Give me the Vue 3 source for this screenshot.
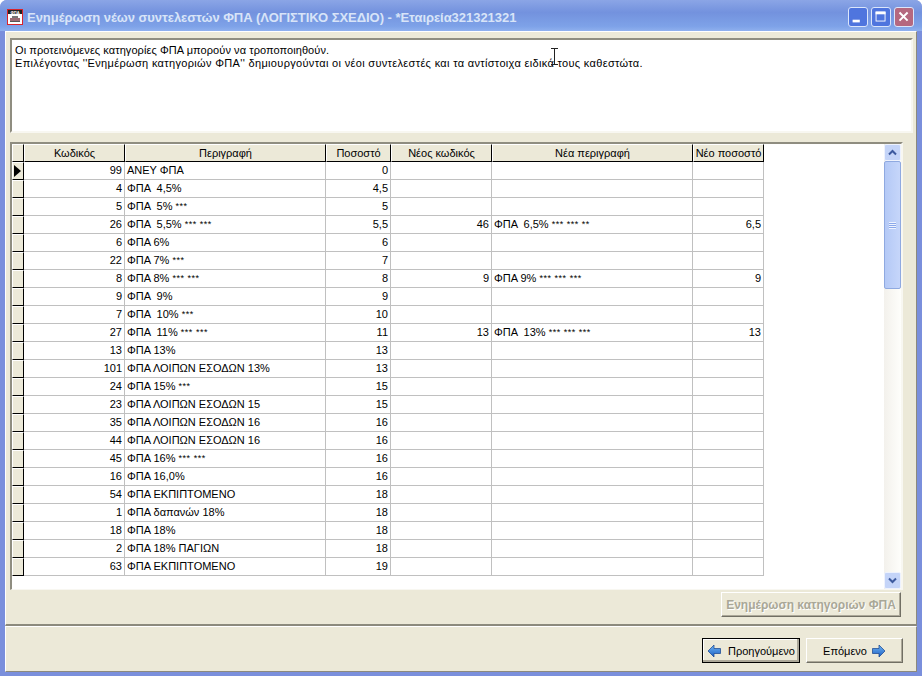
<script setup>
const columns = [
  { key: 'code', label: 'Κωδικός', cls: 'num' },
  { key: 'desc', label: 'Περιγραφή', cls: 'txt' },
  { key: 'pct', label: 'Ποσοστό', cls: 'num' },
  { key: 'newCode', label: 'Νέος κωδικός', cls: 'num' },
  { key: 'newDesc', label: 'Νέα περιγραφή', cls: 'txt' },
  { key: 'newPct', label: 'Νέο ποσοστό', cls: 'num' }
]

const rows = [
  { code: '99', desc: 'ΑΝΕΥ ΦΠΑ', pct: '0' },
  { code: '4', desc: 'ΦΠΑ  4,5%', pct: '4,5' },
  { code: '5', desc: 'ΦΠΑ  5% ***', pct: '5' },
  { code: '26', desc: 'ΦΠΑ  5,5% *** ***', pct: '5,5', newCode: '46', newDesc: 'ΦΠΑ  6,5% *** *** **', newPct: '6,5' },
  { code: '6', desc: 'ΦΠΑ 6%', pct: '6' },
  { code: '22', desc: 'ΦΠΑ 7% ***', pct: '7' },
  { code: '8', desc: 'ΦΠΑ 8% *** ***', pct: '8', newCode: '9', newDesc: 'ΦΠΑ 9% *** *** ***', newPct: '9' },
  { code: '9', desc: 'ΦΠΑ  9%', pct: '9' },
  { code: '7', desc: 'ΦΠΑ  10% ***', pct: '10' },
  { code: '27', desc: 'ΦΠΑ  11% *** ***', pct: '11', newCode: '13', newDesc: 'ΦΠΑ  13% *** *** ***', newPct: '13' },
  { code: '13', desc: 'ΦΠΑ 13%', pct: '13' },
  { code: '101', desc: 'ΦΠΑ ΛΟΙΠΩΝ ΕΣΟΔΩΝ 13%', pct: '13' },
  { code: '24', desc: 'ΦΠΑ 15% ***', pct: '15' },
  { code: '23', desc: 'ΦΠΑ ΛΟΙΠΩΝ ΕΣΟΔΩΝ 15', pct: '15' },
  { code: '35', desc: 'ΦΠΑ ΛΟΙΠΩΝ ΕΣΟΔΩΝ 16', pct: '16' },
  { code: '44', desc: 'ΦΠΑ ΛΟΙΠΩΝ ΕΣΟΔΩΝ 16', pct: '16' },
  { code: '45', desc: 'ΦΠΑ 16% *** ***', pct: '16' },
  { code: '16', desc: 'ΦΠΑ 16,0%', pct: '16' },
  { code: '54', desc: 'ΦΠΑ ΕΚΠΙΠΤΟΜΕΝΟ', pct: '18' },
  { code: '1', desc: 'ΦΠΑ δαπανών 18%', pct: '18' },
  { code: '18', desc: 'ΦΠΑ 18%', pct: '18' },
  { code: '2', desc: 'ΦΠΑ 18% ΠΑΓΙΩΝ', pct: '18' },
  { code: '63', desc: 'ΦΠΑ ΕΚΠΙΠΤΟΜΕΝΟ', pct: '19' }
]

// the asterisks are much smaller than the rest of the text in the old grid font
const parts = (value) => (value ? value.split(/(\*+)/).filter(Boolean) : [])
</script>

<template>
  <div class="window">
    <div class="titlebar">
      <svg class="app-icon" width="16" height="16" viewBox="0 0 16 16">
        <rect x="0.5" y="0.5" width="15" height="15" fill="#fff" stroke="#d8232a" />
        <rect x="1" y="1" width="14" height="4" fill="#222" />
        <text x="8" y="4.6" font-size="4" font-weight="700" text-anchor="middle" fill="#fff" font-family="Liberation Sans, sans-serif">ΦΠΑ</text>
        <rect x="5" y="7" width="6" height="2" fill="#777" />
        <rect x="3" y="9" width="10" height="3" fill="#9b6a72" />
        <rect x="3" y="12" width="10" height="1" fill="#555" />
      </svg>
      <div class="title">Ενημέρωση νέων συντελεστών ΦΠΑ (ΛΟΓΙΣΤΙΚΟ ΣΧΕΔΙΟ) - *Εταιρεία321321321</div>
      <div class="caption-btns">
        <button class="cap">
          <svg width="20" height="20" viewBox="0 0 20 20"><rect x="4" y="13" width="8" height="3" fill="#fff" /></svg>
        </button>
        <button class="cap">
          <svg width="20" height="20" viewBox="0 0 20 20"><rect x="4.500" y="4.500" width="10" height="10" fill="none" stroke="#fff" /><rect x="4" y="4" width="11" height="3" fill="#fff" /></svg>
        </button>
        <button class="cap cap-close">
          <svg width="20" height="20" viewBox="0 0 20 20"><path d="M5 5l9 9M14 5l-9 9" stroke="#fff" stroke-width="2.2" /></svg>
        </button>
      </div>
    </div>

    <div class="client">
      <div class="main-panel">
        <div class="memo">
          <div class="line-one">Οι προτεινόμενες κατηγορίες ΦΠΑ μπορούν να τροποποιηθούν.</div>
          <div class="line-two">Επιλέγοντας ''Ενημέρωση κατηγοριών ΦΠΑ'' δημιουργούνται οι νέοι συντελεστές και τα αντίστοιχα ειδικά τους καθεστώτα.</div>
          <svg class="ibeam" width="7" height="17" viewBox="0 0 7 17">
            <path d="M0 .5h7M0 16.500h7M3.500 0v17" stroke="#222" fill="none" />
          </svg>
        </div>

        <div class="grid">
          <div class="grid-table">
            <div class="g-row g-head">
              <div class="ind head-cell"></div>
              <div v-for="c in columns" :key="c.key" class="head-cell">{{ c.label }}</div>
            </div>
            <div v-for="(r, i) in rows" :key="r.code + i" class="g-row">
              <div class="ind">
                <svg v-if="i === 0" width="9" height="14" viewBox="0 0 9 14"><path d="M1 1l7 6-7 6z" fill="#000" /></svg>
              </div>
              <div v-for="c in columns" :key="c.key" class="cell" :class="c.cls"><template v-for="(p, n) in parts(r[c.key])" :key="n"><span v-if="p[0] === '*'" class="stars">{{ p }}</span><template v-else>{{ p }}</template></template></div>
            </div>
          </div>
          <div class="scrollbar">
            <button class="sb-btn">
              <svg width="9" height="7" viewBox="0 0 9 7"><path d="M1 5.500l3.500-3.500 3.500 3.500" fill="none" stroke="#3d5a9e" stroke-width="2" /></svg>
            </button>
            <div class="sb-track">
              <div class="sb-thumb"><span class="grip"></span></div>
            </div>
            <button class="sb-btn">
              <svg width="9" height="7" viewBox="0 0 9 7"><path d="M1 1.500l3.500 3.500 3.500-3.500" fill="none" stroke="#3d5a9e" stroke-width="2" /></svg>
            </button>
          </div>
        </div>

        <div class="update-row">
          <button class="btn btn-update" disabled>Ενημέρωση κατηγοριών ΦΠΑ</button>
        </div>
      </div>

      <div class="nav-panel">
        <button class="btn btn-nav btn-prev btn-default">
          <svg width="14" height="14" viewBox="0 0 14 14">
            <defs>
              <linearGradient id="arrow-l" x1="0" y1="0" x2="0" y2="1">
                <stop offset="0" stop-color="#6fb4f2" />
                <stop offset="1" stop-color="#1c5fc4" />
              </linearGradient>
            </defs>
            <path d="M7 1L1 7l6 6V9.500h6.500v-5H7z" fill="url(#arrow-l)" stroke="#12408c" stroke-width="0.7" />
          </svg>
          Προηγούμενο
        </button>
        <button class="btn btn-nav">
          Επόμενο
          <svg width="14" height="14" viewBox="0 0 14 14">
            <defs>
              <linearGradient id="arrow-r" x1="0" y1="0" x2="0" y2="1">
                <stop offset="0" stop-color="#6fb4f2" />
                <stop offset="1" stop-color="#1c5fc4" />
              </linearGradient>
            </defs>
            <path d="M7 1l6 6-6 6V9.500H.5v-5H7z" fill="url(#arrow-r)" stroke="#12408c" stroke-width="0.7" />
          </svg>
        </button>
      </div>
    </div>
  </div>
</template>

<style>
html, body {
  margin: 0;
  background: #fff;
}
</style>

<style scoped>
.window {
  width: 922px;
  height: 676px;
  box-sizing: border-box;
  display: flex;
  flex-direction: column;
  background: #7a8fdc;
  border-radius: 7px 7px 0 0;
  font-family: "Liberation Sans", Arial, sans-serif;
  font-size: 11px;
  color: #000;
  overflow: hidden;
}

.titlebar {
  height: 31px;
  flex: none;
  display: flex;
  align-items: center;
  padding: 3px 8px 0 7px;
  box-sizing: border-box;
  background: linear-gradient(#8ba5e6 0, #7392de 40%, #7ea2e8 85%, #8fb0ee 100%);
}

.app-icon {
  flex: none;
  margin-right: 4px;
}

.title {
  flex: 1;
  font-size: 13px;
  font-weight: 700;
  letter-spacing: -0.04px;
  color: #d8e4f8;
  white-space: nowrap;
}

.caption-btns {
  display: flex;
  gap: 3px;
}

.cap {
  width: 20px;
  height: 20px;
  padding: 0;
  border: 1px solid #dbe6fb;
  border-radius: 3px;
  background: #4f75de;
  display: flex;
  align-items: center;
  justify-content: center;
}

.cap-close {
  background: #b5687f;
}

.client {
  flex: 1;
  margin: 0 5px 4px 5px;
  background: #ece9d8;
  display: flex;
  flex-direction: column;
  min-height: 0;
}

.main-panel {
  flex: 1;
  display: flex;
  flex-direction: column;
  padding: 7px 0 0 5px;
  border: 1px solid;
  border-color: #fff #8c8a7d #8c8a7d #fff;
  border-bottom-width: 2px;
  min-height: 0;
}

.memo {
  position: relative;
  height: 95px;
  box-sizing: border-box;
  margin: -1px 3px 0 -1px;
  padding: 4px 0 0 3px;
  background: #fff;
  border: 2px solid;
  border-color: #8f8d80 #f8f7f1 #f8f7f1 #8f8d80;
  line-height: 13px;
}

.line-one {
  letter-spacing: 0.07px;
}

.line-two {
  letter-spacing: 0.33px;
}

.ibeam {
  position: absolute;
  left: 539px;
  top: 8px;
}

.grid {
  margin: 9px 13px 0 -1px;
  height: 448px;
  box-sizing: border-box;
  display: flex;
  background: #fff;
  border: 2px solid;
  border-color: #8f8d80 #f8f7f1 #f8f7f1 #8f8d80;
  border-bottom-width: 1px;
}

.grid-table {
  flex: 1;
}

.g-row {
  display: grid;
  grid-template-columns: 12px 101px 201px 65px 101px 201px 71px;
  width: 752px;
  height: 18px;
}

.g-head {
  height: 18px;
}

.head-cell {
  box-sizing: border-box;
  background: #ece9d8;
  border-top: 1px solid #fff;
  border-left: 1px solid #fff;
  border-right: 1px solid #000;
  border-bottom: 1px solid #000;
  text-align: center;
  line-height: 16px;
  white-space: nowrap;
  overflow: hidden;
}

.ind {
  box-sizing: border-box;
  background: #ece9d8;
  border-top: 1px solid #fff;
  border-left: 1px solid #fff;
  border-right: 1px solid #000;
  border-bottom: 1px solid #000;
  display: flex;
  align-items: center;
}

.cell {
  box-sizing: border-box;
  border-right: 1px solid #c0c0c0;
  border-bottom: 1px solid #c0c0c0;
  padding: 0 2px;
  line-height: 17px;
  white-space: pre;
  overflow: hidden;
}

.stars {
  font-size: 9px;
  line-height: 0;
  letter-spacing: 0.5px;
  vertical-align: 1px;
}

.num {
  text-align: right;
}

.scrollbar {
  width: 17px;
  flex: none;
  display: flex;
  flex-direction: column;
  background: linear-gradient(90deg, #f3f1ec, #fefefb);
}

.sb-btn {
  width: 17px;
  height: 17px;
  padding: 0;
  border: 1px solid #eef2fd;
  border-radius: 2px;
  background: #c4d4f8;
  display: flex;
  align-items: center;
  justify-content: center;
  flex: none;
}

.sb-track {
  flex: 1;
}

.sb-thumb {
  height: 128px;
  box-sizing: border-box;
  border: 1px solid #8fa9e0;
  border-radius: 2px;
  background: linear-gradient(90deg, #b4c9f6, #c6d6fa);
  display: flex;
  align-items: center;
  justify-content: center;
}

.grip {
  display: block;
  width: 7px;
  height: 7px;
  background: repeating-linear-gradient(#eef3fe 0 1px, #8ba8ea 1px 2px);
}

.update-row {
  display: flex;
  justify-content: flex-end;
  padding: 2px 15px 0 0;
}

.btn {
  box-sizing: border-box;
  font-family: inherit;
  font-size: 11px;
  color: #000;
  background: #ece9d8;
  border: 1px solid;
  border-color: #fff #716f64 #716f64 #fff;
  box-shadow: inset -1px -1px 0 #aca899;
  display: flex;
  align-items: center;
  justify-content: center;
  gap: 5px;
  padding: 0;
}

.btn-update {
  width: 180px;
  height: 25px;
  font-size: 12px;
  font-weight: 700;
  color: #a9a797;
  text-shadow: 1px 1px 0 #fff;
}

.nav-panel {
  height: 46px;
  flex: none;
  display: flex;
  justify-content: flex-end;
  gap: 6px;
  padding: 11px 13px 0 0;
  box-sizing: border-box;
  border: 1px solid;
  border-color: #fff #8c8a7d #8c8a7d #fff;
}

.btn-nav {
  width: 97px;
  height: 25px;
}

.btn-prev {
  width: 98px;
  gap: 7px;
}

.btn-default {
  outline: 1px solid #000;
  outline-offset: -1px;
  box-shadow: inset -2px -2px 0 #aca899, inset 1px 1px 0 #fff;
}
</style>
